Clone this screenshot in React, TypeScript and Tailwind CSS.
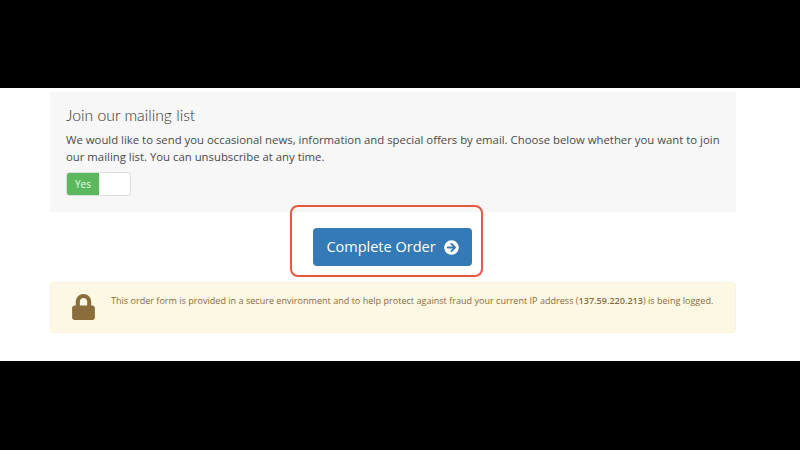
import { FaLock, FaArrowCircleRight } from "react-icons/fa";

export default function App() {
  return (
    <div className="w-[800px] h-[450px] bg-black overflow-hidden flex flex-col font-['Open_Sans',sans-serif]">
      <div className="h-[88px] shrink-0" />
      <div className="h-[273px] shrink-0 bg-white px-[50px] pt-[4px]">
        <div className="w-[686px] h-[120px] bg-[#f7f7f7] px-[16px] pt-[13px]">
          <h3 className="font-['Lato',sans-serif] text-[15.75px] leading-[20px] font-light text-[#333]">Join our mailing list</h3>
          <p className="mt-[7px] text-[11.35px] leading-[16.5px] text-[#4a4a4a]">
            We would like to send you occasional news, information and special offers by email. Choose below whether you want to join our mailing list. You can unsubscribe at any time.
          </p>
          <div className="mt-[7px] w-[65px] h-[24px] flex rounded-[3px] border border-[#ddd] overflow-hidden bg-white">
            <div className="w-[32px] bg-[#5cb85c] text-[#eef8ee] text-[10px] font-normal flex items-center justify-center">Yes</div>
          </div>
        </div>
        <div className="relative w-[686px] flex justify-center pt-[16px] pr-[1px]">
          <button className="w-[159px] h-[38px] bg-[#337ab7] rounded-[4px] text-white text-[14.5px] flex items-center justify-center gap-[8px]">
            Complete Order <FaArrowCircleRight className="w-[15px] h-[15px]" />
          </button>
          <div className="absolute left-[240px] top-[-7px] w-[193px] h-[72px] rounded-[8px] border-2 border-[#e8573f]" />
        </div>
        <div className="mt-[16px] w-[686px] h-[51px] bg-[#fdf8e4] border border-[#faf3da] rounded-[4px] flex items-start">
          <FaLock className="ml-[21px] mt-[11px] w-[23px] h-[26px] text-[#8a6d3b] shrink-0" />
          <p className="ml-[16px] mt-[11px] text-[9.07px] leading-[14px] text-[#8a6d3b] whitespace-nowrap">
            This order form is provided in a secure environment and to help protect against fraud your current IP address (<strong className="font-semibold">137.59.220.213</strong>) is being logged.
          </p>
        </div>
      </div>
    </div>
  );
}
